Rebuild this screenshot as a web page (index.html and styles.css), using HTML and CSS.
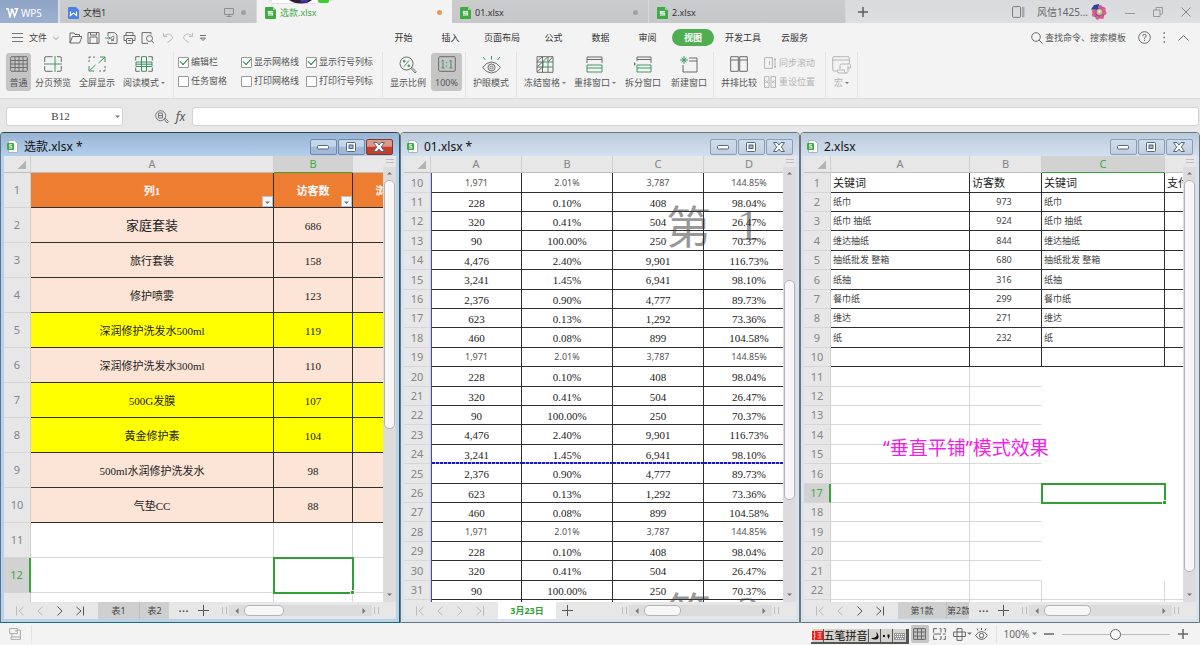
FILE: index.html
```html
<!DOCTYPE html>
<html lang="zh-CN">
<head>
<meta charset="utf-8">
<title>WPS 表格</title>
<link rel="stylesheet" href="styles.css">
</head>
<body>
<svg class="defs" aria-hidden="true">
  <symbol id="sheet-file" viewBox="0 0 11 12"><path d="M1 0h7l3 3v8a1 1 0 0 1-1 1H1a1 1 0 0 1-1-1V1a1 1 0 0 1 1-1z" fill="#3fab43"/><path d="M8 0l3 3H8z" fill="#9bd49d"/><path d="M8 4.500H3.500v1.700h4v1.800H3" fill="none" stroke="#fff" stroke-width="1.200"/></symbol>
  <symbol id="book" viewBox="0 0 11 13"><path d="M1.500.5h6l3 3v9h-9z" fill="#fff" stroke="#a9b4bd"/><rect x="0" y="3" width="7" height="7" rx="1" fill="#3fab43"/><path d="M5 4.700H2.500v1.600h2.300v1.800H2" fill="none" stroke="#fff" stroke-width=".9"/></symbol>
  <symbol id="win-min" viewBox="0 0 14 12"><rect x="1.500" y="4.500" width="11" height="3.500" rx="1" fill="#fff" stroke="#576579"/></symbol>
  <symbol id="win-max" viewBox="0 0 14 12"><rect x="2.500" y="1.500" width="9" height="9" rx="1" fill="#fff" stroke="#576579"/><rect x="5" y="4" width="4" height="3.500" fill="#9db4ce" stroke="#576579"/></symbol>
  <symbol id="win-close" viewBox="0 0 14 12"><path d="M1.500 1.500h3.500L7 4l2-2.500h3.500L9.300 6l3.200 4.500H9L7 8l-2 2.500H1.500L4.700 6z" fill="#fff" stroke="#576579" stroke-linejoin="round"/></symbol>
  <symbol id="first" viewBox="0 0 10 10"><path d="M1.500.5v9M8.500 1L4 5l4.500 4"/></symbol>
  <symbol id="prev" viewBox="0 0 10 10"><path d="M7.500.5L3 5l4.500 4.500"/></symbol>
  <symbol id="next" viewBox="0 0 10 10"><path d="M2.500.5L7 5 2.500 9.500"/></symbol>
  <symbol id="last" viewBox="0 0 10 10"><path d="M8.500.5v9M1.500 1L6 5 1.500 9"/></symbol>
  <symbol id="plus" viewBox="0 0 11 11"><path d="M5.500 0v11M0 5.500h11"/></symbol>
  <symbol id="table-grid" viewBox="0 0 18 16"><rect x=".7" y=".7" width="16.600" height="14.600" rx="1"/><path d="M1 4.500h16M1 8h16M1 11.500h16M5 1v14M9 1v14M13 1v14"/></symbol>
  <symbol id="tri-up" viewBox="0 0 6 4"><path d="M0 3.500h5L2.500 1z" fill="#777"/></symbol>
  <symbol id="tri-down" viewBox="0 0 6 4"><path d="M0 .5h5L2.500 3z" fill="#777"/></symbol>
  <symbol id="tri-left" viewBox="0 0 4 6"><path d="M3.500 0v6L.5 3z" fill="#777"/></symbol>
  <symbol id="tri-right" viewBox="0 0 4 6"><path d="M.5 0v6l3-3z" fill="#777"/></symbol>
</svg>

<header class="tabbar">
  <button class="wps"><svg width="13" height="10" viewBox="0 0 13 10"><path d="M0 .8h2L4 8.500 6 2M4.500 1.500l2 0 2 7L11.500.8H8.500" fill="none" stroke="#fff" stroke-width="1.500"/></svg>WPS</button>
  <button class="tab"><svg class="file" width="11" height="12" viewBox="0 0 11 12"><path d="M1 0h7l3 3v8a1 1 0 0 1-1 1H1a1 1 0 0 1-1-1V1a1 1 0 0 1 1-1z" fill="#4a82e4"/><path d="M2.500 4.500v4L5.500 6l3 2.500v-4" fill="none" stroke="#fff" stroke-width="1.200"/></svg>文档1
    <svg class="monitor" width="10" height="9" viewBox="0 0 10 9"><path d="M.5.500h9v6h-9zM5 6.500v2M2.500 8.500h5" fill="none" stroke="#8c8c8c"/></svg><i class="dot"></i></button>
  <button class="tab active"><svg class="file" width="11" height="12"><use href="#sheet-file"/></svg>选款.xlsx<i class="dot orange"></i>
    <svg class="float-head" width="66" height="12" viewBox="0 0 66 12"><path d="M0 0h66v1q-16 0-18 3H5Q4 1 0 0z" fill="#e2e2e2"/><path d="M5 0h50v3H5z" fill="#fff"/><path d="M22 0h23q-4 3.500-11 3.500T22 0z" fill="#2a1b30"/><path d="M33 0h9l-3 2.500h-5z" fill="#4437a6"/><path d="M51 0h11v1q0 2-2 2h-7q-2 0-2-2z" fill="#3ad12a"/></svg></button>
  <button class="tab"><svg class="file" width="11" height="12"><use href="#sheet-file"/></svg>01.xlsx<i class="dot"></i></button>
  <button class="tab"><svg class="file" width="11" height="12"><use href="#sheet-file"/></svg>2.xlsx</button>
  <button class="new-tab" aria-label="新建"><svg width="10" height="10" viewBox="0 0 10 10"><path d="M5 0v10M0 5h10" stroke="#5d5d5d" stroke-width="1.500"/></svg></button>
  <div class="account">
    <svg width="13" height="12" viewBox="0 0 13 12"><rect x=".6" y=".6" width="8" height="10.800" rx="1" fill="none" stroke="#777"/><path d="M10 .8h1.500q1 0 1 1v8.400q0 1-1 1H10z" fill="#aaa"/></svg>
    <span class="user">风信1425...</span>
    <svg width="16" height="16" viewBox="0 0 16 16"><circle cx="8" cy="8" r="6.500" fill="#8c5f77"/><path d="M0 5.500L3 1l5-1 1 4-5 2z" fill="#24499c"/><g fill="#dd5a92"><circle cx="9" cy="3" r="2"/><circle cx="12.700" cy="5" r="2"/><circle cx="13.500" cy="9" r="2"/><circle cx="11" cy="13" r="2"/><circle cx="6.500" cy="13.800" r="2"/><circle cx="2.800" cy="10.800" r="2"/><circle cx="3" cy="7" r="2"/></g><circle cx="8.500" cy="8" r="3" fill="#cdb793"/><circle cx="8.500" cy="7.500" r="1.400" fill="#f1e6cf"/></svg>
    <button aria-label="最小化"><svg width="10" height="10" viewBox="0 0 10 10"><path d="M0 6.500h10" stroke="#999"/></svg></button>
    <button aria-label="还原"><svg width="10" height="10" viewBox="0 0 10 10"><path d="M.5 3h6.500v6.500H.5zM3 3V.5h6.500V7H7" fill="none" stroke="#999"/></svg></button>
    <button aria-label="关闭"><svg width="10" height="10" viewBox="0 0 10 10"><path d="M.5.500l9 9M9.500.500l-9 9" stroke="#888"/></svg></button>
  </div>
</header>

<div class="menubar">
  <div class="quick">
    <button class="file-menu"><svg width="11" height="9" viewBox="0 0 11 9"><path d="M0 .5h11M0 4.500h11M0 8.500h11" stroke="#777"/></svg>文件<svg width="6" height="4" viewBox="0 0 6 4"><path d="M0 .5l3 3 3-3" fill="none" stroke="#999"/></svg></button>
    <button aria-label="打开"><svg width="13" height="12" viewBox="0 0 13 12"><path d="M1 11V1h4l1 1.500h4.500V4M1 11l2.500-6.500H13L10.500 11z"/></svg></button>
    <button aria-label="保存"><svg width="13" height="12" viewBox="0 0 13 12"><path d="M1 .6h11v10.800H1zM3 11V5h7v6M3.500.6v2.500h6V.6"/></svg></button>
    <button aria-label="输出"><svg width="13" height="12" viewBox="0 0 13 12"><path d="M3 4V.6h6.500L12 3v8.400H3V9M6 9q3-1 3-3.500T6.500 5 9 8.500"/><path class="green" d="M0 6h5M3.500 4.500L5 6 3.500 7.500"/></svg></button>
    <button aria-label="打印"><svg width="13" height="12" viewBox="0 0 13 12"><path d="M3 3V.6h7V3M3 8.500H1V3.500h11v5h-2M3.500 6.500h6v4.900h-6zM5 8.500h3"/></svg></button>
    <button aria-label="打印预览"><svg width="13" height="12" viewBox="0 0 13 12"><path d="M10 2.500V.6H1v10.800h6M10.500 8.500l2.300 2.800"/><circle cx="8.500" cy="6.500" r="3"/></svg></button>
    <button class="dim" aria-label="撤销"><svg width="12" height="11" viewBox="0 0 12 11"><path d="M1.500 1v3.500H5M1.500 4.500Q6 .5 9 3t.500 4.500L5.500 10.500"/></svg></button>
    <button class="dim" aria-label="恢复"><svg width="12" height="11" viewBox="0 0 12 11"><path d="M10.500 1v3.500H7M10.500 4.500Q6 .5 3 3t-.500 4.500L6.500 10.500"/></svg></button>
    <button aria-label="更多"><svg width="9" height="8" viewBox="0 0 9 8"><path d="M1 1.500h6M1.500 4L4 6.500 6.500 4z"/></svg></button>
  </div>
  <nav class="menus">
    <button>开始</button><button>插入</button><button class="wide">页面布局</button><button>公式</button><button>数据</button><button>审阅</button><button class="current">视图</button><button class="wide">开发工具</button><button>云服务</button>
  </nav>
  <div class="find">
    <button class="search"><svg width="12" height="12" viewBox="0 0 12 12"><circle cx="5" cy="5" r="4.300"/><path d="M8 8l3.500 3.500"/></svg>查找命令、搜索模板</button>
    <button aria-label="帮助"><svg width="13" height="13" viewBox="0 0 13 13"><circle cx="6.500" cy="6.500" r="5.800"/><path d="M4.700 5.200q0-1.800 1.800-1.800t1.800 1.600q0 1-1.800 1.800v1M6.500 8.800v1.200"/></svg></button>
    <button aria-label="选项"><svg width="3" height="11" viewBox="0 0 3 11"><path d="M.5 1h1.500M.5 5.500h1.500M.5 10h1.500" stroke-width="1.500"/></svg></button>
    <button aria-label="收起"><svg width="11" height="6" viewBox="0 0 11 6"><path d="M.5 5.500l5-5 5 5"/></svg></button>
  </div>
</div>

<div class="ribbon">
  <div class="group g-views">
    <button class="tool on narrow"><svg width="18" height="16"><use href="#table-grid"/></svg>普通</button>
    <button class="tool"><svg width="18" height="16" viewBox="0 0 18 16"><path d="M8.500.7H2q-1.300 0-1.300 1.300v4M8.500 15.300H2q-1.300 0-1.300-1.300v-4M13 .7h3q1.300 0 1.300 1.300v4M13 15.300h3q1.300 0 1.300-1.300v-4"/><path class="green" d="M0 8h18M11 0v16"/></svg>分页预览</button>
    <button class="tool"><svg width="18" height="16" viewBox="0 0 18 16"><path d="M1 6V4M1 2.500V1h2M5 1h2M17 10v2M17 13.500V15h-2M13 15h-2"/><path class="green" d="M10.500 7L17 1M12 1h5v5M7.500 9L1 15M1 10v5h5"/></svg>全屏显示</button>
    <button class="tool drop"><svg width="18" height="16" viewBox="0 0 18 16"><path d="M.7 4.500V.7h4M13.300.7h4v3.800M.7 11.500v3.800h4M13.300 15.300h4v-3.800"/><path class="green" d="M1 6h16v4.500H1zM6.500.7h5v14.600h-5zM1 8.200h16"/></svg><span>阅读模式</span></button>
  </div>
  <div class="group g-checks">
    <label><input type="checkbox" checked>编辑栏</label><label><input type="checkbox" checked>显示网格线</label><label><input type="checkbox" checked>显示行号列标</label>
    <label><input type="checkbox">任务窗格</label><label><input type="checkbox">打印网格线</label><label><input type="checkbox">打印行号列标</label>
  </div>
  <div class="group g-zoom">
    <button class="tool"><svg width="18" height="18" viewBox="0 0 18 18"><circle cx="7.500" cy="7.500" r="6.500"/><path d="M12 12.500l1-1 4.300 4.300-1.200 1.200z"/><path class="green" d="M10 4.500l-5 6M4.500 4.500h1.500V6H4.500zM9 9h1.500v1.500H9z"/></svg>显示比例</button>
    <button class="tool on mid"><svg width="18" height="16" viewBox="0 0 18 16"><rect x=".7" y=".7" width="16.600" height="14.600" rx="1"/><path class="green" d="M3.500 5L5 4v8M3.500 12h3M11.500 5L13 4v8M11.500 12h3M8.500 6v1.200M8.500 9.500v1.200"/></svg>100%</button>
  </div>
  <div class="group g-eye">
    <button class="tool"><svg width="19" height="18" viewBox="0 0 19 18"><path d="M.6 11.500q4-5.500 9-5.500t8.900 5.500q-4 5.500-8.900 5.500T.6 11.500z"/><circle cx="9.500" cy="11.500" r="3.500"/><circle cx="9.500" cy="11.500" r="1.500"/><path class="green" d="M9.500 0v3.500M1 1l2.500 3M18 1l-2.500 3"/></svg>护眼模式</button>
  </div>
  <div class="group g-window">
    <button class="tool drop"><svg width="18" height="17" viewBox="0 0 18 17"><path d="M1 .7h16v15.600H1zM1 6h7M1 11h7M6.500 1v15M12 1v5M12 11v5M1.500 5l4.500-4M7 5.500L11.500 1M12.500 5.500L16.500 1M1.500 10.500L6 6.500M1.500 15.500L6 11.500"/><path class="green" d="M17 6H7v5h10M12 6v5"/></svg><span>冻结窗格</span></button>
    <button class="tool drop"><svg width="18" height="17" viewBox="0 0 18 17"><path d="M1 7V1h15v6M1 3.500h15"/><path class="green" d="M1 9h15v7H1zM1 12h15"/></svg><span>重排窗口</span></button>
    <button class="tool w46"><svg width="18" height="17" viewBox="0 0 18 17"><path d="M3 5V1h14v6M3 3.500h14"/><path class="green" d="M3 9h14v7H3zM3 12h14"/><path d="M0 6v4l2-2z" fill="#3f9662" stroke="none"/></svg>拆分窗口</button>
    <button class="tool w46"><svg width="18" height="17" viewBox="0 0 18 17"><path d="M3 9v7h14V2H9M9 5h8"/><path class="green" d="M4 0v8M0 4h8M1.500 1.500l5 5M6.500 1.500l-5 5"/></svg>新建窗口</button>
  </div>
  <div class="group g-compare">
    <button class="tool w46"><svg width="18" height="16" viewBox="0 0 18 16"><path d="M.7.7h7.600v14.600H.7zM9.700.7h7.600v14.600H9.700zM.7 4h7.600M9.700 4h7.600"/></svg>并排比较</button>
    <div class="stack">
      <button disabled><svg width="12" height="12" viewBox="0 0 12 12"><path d="M.6.600h7.800v10.800H.6zM5.500 4v4M11 1v10M10 2.500h2M10 9.500h2"/></svg>同步滚动</button>
      <button disabled><svg width="12" height="12" viewBox="0 0 12 12"><path d="M.5.600h4.500v10.800H.5zM7 .6h4.500v10.800H7zM1.500 4.500L4 7M4 4.500L1.500 7M8 4.500L10.500 7M10.500 4.500L8 7"/></svg>重设位置</button>
    </div>
  </div>
  <div class="group g-macro">
    <button class="tool drop" disabled><svg width="19" height="18" viewBox="0 0 19 18"><path d="M6 15H2Q.7 15 .7 14V2Q.7.7 2 .7h14q1.300 0 1.300 1.300v6M.7 4h16.600M8 13V9.500q0-1.500 1.500-1.500h8q1 0 1 1.500V12H16M16 10v5.500q0 1.500-1.500 1.500H7q-1.500 0-1.500-1.500V14h7v1.500q0 1.500 2 1.500"/></svg><span>宏</span></button>
  </div>
</div>

<div class="formula">
  <button class="namebox">B12<svg width="6" height="4"><use href="#tri-down"/></svg></button>
  <button class="lens" aria-label="浏览公式"><svg width="14" height="14" viewBox="0 0 14 14"><circle cx="5.700" cy="5.700" r="5" fill="none" stroke="#777"/><path d="M3.500 3h4v5h-4zM3.500 5.500h4M9 9l1-1 3.500 3.500-1.500 1.500z" fill="none" stroke="#777"/></svg></button>
  <button class="fx">fx</button>
  <input type="text" aria-label="编辑栏">
</div>

<main class="workspace">
  <section class="window front">
    <header class="title"><svg width="11" height="13"><use href="#book"/></svg><h2>选款.xlsx *</h2>
      <button aria-label="最小化"><svg width="14" height="12"><use href="#win-min"/></svg></button><button aria-label="最大化"><svg width="14" height="12"><use href="#win-max"/></svg></button><button class="close" aria-label="关闭"><svg width="14" height="12"><use href="#win-close"/></svg></button></header>
    <div class="pane">
      <div class="sheet">
        <table class="grid products">
          <colgroup><col class="c27"><col class="c243"><col class="c79"><col class="c79"></colgroup>
          <thead><tr><th class="corner"></th><th>A</th><th class="sel">B</th><th></th></tr></thead>
          <tbody>
            <tr class="heading"><th>1</th><td>列1<button class="filter" aria-label="筛选"><svg width="6" height="4"><use href="#tri-down"/></svg></button></td><td>访客数<button class="filter" aria-label="筛选"><svg width="6" height="4"><use href="#tri-down"/></svg></button></td><td>浏览量</td></tr>
            <tr><th>2</th><td class="big">家庭套装</td><td>686</td><td></td></tr>
            <tr><th>3</th><td>旅行套装</td><td>158</td><td></td></tr>
            <tr><th>4</th><td>修护喷雾</td><td>123</td><td></td></tr>
            <tr class="hot"><th>5</th><td>深润修护洗发水500ml</td><td>119</td><td></td></tr>
            <tr><th>6</th><td>深润修护洗发水300ml</td><td>110</td><td></td></tr>
            <tr class="hot"><th>7</th><td>500G发膜</td><td>107</td><td></td></tr>
            <tr class="hot"><th>8</th><td>黄金修护素</td><td>104</td><td></td></tr>
            <tr><th>9</th><td>500ml水润修护洗发水</td><td>98</td><td></td></tr>
            <tr><th>10</th><td>气垫CC</td><td>88</td><td></td></tr>
            <tr class="blank"><th>11</th><td></td><td></td><td></td></tr>
            <tr class="blank"><th class="sel">12</th><td></td><td class="cursor"></td><td></td></tr>
            <tr class="blank"><th></th><td></td><td></td><td></td></tr>
          </tbody>
        </table>
      </div>
      <div class="vscroll"><i class="split"></i><svg width="6" height="4"><use href="#tri-up"/></svg><div class="track"><i class="thumb t1"></i></div><svg width="6" height="4"><use href="#tri-down"/></svg></div>
    </div>
    <footer class="strip">
      <div class="arrows"><button disabled aria-label="第一张"><svg width="10" height="10"><use href="#first"/></svg></button><button disabled aria-label="上一张"><svg width="10" height="10"><use href="#prev"/></svg></button><button aria-label="下一张"><svg width="10" height="10"><use href="#next"/></svg></button><button aria-label="最后一张"><svg width="10" height="10"><use href="#last"/></svg></button></div>
      <button class="stab">表1</button><button class="stab second">表2</button>
      <button class="more" aria-label="更多工作表">···</button><button class="add" aria-label="新建工作表"><svg width="11" height="11"><use href="#plus"/></svg></button>
      <div class="hscroll"><svg width="4" height="6"><use href="#tri-left"/></svg><div class="htrack"><i class="hthumb h1"></i></div><svg width="4" height="6"><use href="#tri-right"/></svg></div>
    </footer>
  </section>

  <section class="window">
    <header class="title"><svg width="11" height="13"><use href="#book"/></svg><h2>01.xlsx *</h2>
      <button aria-label="最小化"><svg width="14" height="12"><use href="#win-min"/></svg></button><button aria-label="最大化"><svg width="14" height="12"><use href="#win-max"/></svg></button><button aria-label="关闭"><svg width="14" height="12"><use href="#win-close"/></svg></button></header>
    <div class="pane">
      <div class="sheet">
        <table class="grid dense stats">
          <colgroup><col class="c27"><col class="c91"><col class="c91"><col class="c91"><col class="c91"></colgroup>
          <thead><tr><th class="corner"></th><th>A</th><th>B</th><th>C</th><th>D</th></tr></thead>
          <tbody>
            <tr class="soft"><th>10</th><td>1,971</td><td>2.01%</td><td>3,787</td><td>144.85%</td></tr>
            <tr><th>11</th><td>228</td><td>0.10%</td><td>408</td><td>98.04%</td></tr>
            <tr><th>12</th><td>320</td><td>0.41%</td><td>504</td><td>26.47%</td></tr>
            <tr><th>13</th><td>90</td><td>100.00%</td><td>250</td><td>70.37%</td></tr>
            <tr><th>14</th><td>4,476</td><td>2.40%</td><td>9,901</td><td>116.73%</td></tr>
            <tr><th>15</th><td>3,241</td><td>1.45%</td><td>6,941</td><td>98.10%</td></tr>
            <tr><th>16</th><td>2,376</td><td>0.90%</td><td>4,777</td><td>89.73%</td></tr>
            <tr><th>17</th><td>623</td><td>0.13%</td><td>1,292</td><td>73.36%</td></tr>
            <tr><th>18</th><td>460</td><td>0.08%</td><td>899</td><td>104.58%</td></tr>
            <tr class="soft"><th>19</th><td>1,971</td><td>2.01%</td><td>3,787</td><td>144.85%</td></tr>
            <tr><th>20</th><td>228</td><td>0.10%</td><td>408</td><td>98.04%</td></tr>
            <tr><th>21</th><td>320</td><td>0.41%</td><td>504</td><td>26.47%</td></tr>
            <tr><th>22</th><td>90</td><td>100.00%</td><td>250</td><td>70.37%</td></tr>
            <tr><th>23</th><td>4,476</td><td>2.40%</td><td>9,901</td><td>116.73%</td></tr>
            <tr class="page-end"><th>24</th><td>3,241</td><td>1.45%</td><td>6,941</td><td>98.10%</td></tr>
            <tr><th>25</th><td>2,376</td><td>0.90%</td><td>4,777</td><td>89.73%</td></tr>
            <tr><th>26</th><td>623</td><td>0.13%</td><td>1,292</td><td>73.36%</td></tr>
            <tr><th>27</th><td>460</td><td>0.08%</td><td>899</td><td>104.58%</td></tr>
            <tr class="soft"><th>28</th><td>1,971</td><td>2.01%</td><td>3,787</td><td>144.85%</td></tr>
            <tr><th>29</th><td>228</td><td>0.10%</td><td>408</td><td>98.04%</td></tr>
            <tr><th>30</th><td>320</td><td>0.41%</td><td>504</td><td>26.47%</td></tr>
            <tr><th>31</th><td>90</td><td>100.00%</td><td>250</td><td>70.37%</td></tr>
            <tr><th></th><td></td><td></td><td></td><td></td></tr>
          </tbody>
        </table>
        <div class="watermark page-one"><span>第</span><b>1</b></div>
        <div class="watermark page-two"><span>第</span><b>2</b></div>
      </div>
      <div class="vscroll"><i class="split"></i><svg width="6" height="4"><use href="#tri-up"/></svg><div class="track"><i class="thumb t2"></i></div><svg width="6" height="4"><use href="#tri-down"/></svg></div>
    </div>
    <footer class="strip">
      <div class="arrows"><button disabled aria-label="第一张"><svg width="10" height="10"><use href="#first"/></svg></button><button disabled aria-label="上一张"><svg width="10" height="10"><use href="#prev"/></svg></button><button disabled aria-label="下一张"><svg width="10" height="10"><use href="#next"/></svg></button><button disabled aria-label="最后一张"><svg width="10" height="10"><use href="#last"/></svg></button></div>
      <button class="stab open">3月23日</button>
      <button class="add" aria-label="新建工作表"><svg width="11" height="11"><use href="#plus"/></svg></button>
      <div class="hscroll"><svg width="4" height="6"><use href="#tri-left"/></svg><div class="htrack"><i class="hthumb h2"></i></div><svg width="4" height="6"><use href="#tri-right"/></svg></div>
    </footer>
  </section>

  <section class="window">
    <header class="title"><svg width="11" height="13"><use href="#book"/></svg><h2>2.xlsx</h2>
      <button aria-label="最小化"><svg width="14" height="12"><use href="#win-min"/></svg></button><button aria-label="最大化"><svg width="14" height="12"><use href="#win-max"/></svg></button><button aria-label="关闭"><svg width="14" height="12"><use href="#win-close"/></svg></button></header>
    <div class="pane">
      <div class="sheet">
        <table class="grid dense keywords">
          <colgroup><col class="c27"><col class="c139"><col class="c72"><col class="c123"><col class="c60"></colgroup>
          <thead><tr><th class="corner"></th><th>A</th><th>B</th><th class="sel">C</th><th></th></tr></thead>
          <tbody>
            <tr class="names"><th>1</th><td>关键词</td><td>访客数</td><td>关键词</td><td>支付</td></tr>
            <tr><th>2</th><td>纸巾</td><td class="num">973</td><td>纸巾</td><td></td></tr>
            <tr><th>3</th><td>纸巾 抽纸</td><td class="num">924</td><td>纸巾 抽纸</td><td></td></tr>
            <tr><th>4</th><td>维达抽纸</td><td class="num">844</td><td>维达抽纸</td><td></td></tr>
            <tr><th>5</th><td>抽纸批发 整箱</td><td class="num">680</td><td>抽纸批发 整箱</td><td></td></tr>
            <tr><th>6</th><td>纸抽</td><td class="num">316</td><td>纸抽</td><td></td></tr>
            <tr><th>7</th><td>餐巾纸</td><td class="num">299</td><td>餐巾纸</td><td></td></tr>
            <tr><th>8</th><td>维达</td><td class="num">271</td><td>维达</td><td></td></tr>
            <tr><th>9</th><td>纸</td><td class="num">232</td><td>纸</td><td></td></tr>
            <tr><th>10</th><td></td><td></td><td></td><td></td></tr>
            <tr class="blank"><th>11</th><td></td><td></td><td></td><td></td></tr>
            <tr class="blank"><th>12</th><td></td><td></td><td></td><td></td></tr>
            <tr class="blank"><th>13</th><td></td><td></td><td></td><td></td></tr>
            <tr class="blank"><th>14</th><td></td><td></td><td></td><td></td></tr>
            <tr class="blank"><th>15</th><td></td><td></td><td></td><td></td></tr>
            <tr class="blank"><th>16</th><td></td><td></td><td></td><td></td></tr>
            <tr class="blank"><th class="sel">17</th><td></td><td></td><td class="cursor"></td><td></td></tr>
            <tr class="blank"><th>18</th><td></td><td></td><td></td><td></td></tr>
            <tr class="blank"><th>19</th><td></td><td></td><td></td><td></td></tr>
            <tr class="blank"><th>20</th><td></td><td></td><td></td><td></td></tr>
            <tr class="blank"><th>21</th><td></td><td></td><td></td><td></td></tr>
            <tr class="blank lined"><th>22</th><td></td><td></td><td></td><td></td></tr>
            <tr class="blank lined"><th></th><td></td><td></td><td></td><td></td></tr>
          </tbody>
        </table>
        <p class="note">“垂直平铺”模式效果</p>
      </div>
      <div class="vscroll"><i class="split"></i><svg width="6" height="4"><use href="#tri-up"/></svg><div class="track"><i class="thumb t3"></i></div><svg width="6" height="4"><use href="#tri-down"/></svg></div>
    </div>
    <footer class="strip">
      <div class="arrows"><button disabled aria-label="第一张"><svg width="10" height="10"><use href="#first"/></svg></button><button disabled aria-label="上一张"><svg width="10" height="10"><use href="#prev"/></svg></button><button aria-label="下一张"><svg width="10" height="10"><use href="#next"/></svg></button><button aria-label="最后一张"><svg width="10" height="10"><use href="#last"/></svg></button></div>
      <button class="stab long">第1款</button><button class="stab cut">第2款</button>
      <button class="more" aria-label="更多工作表">···</button><button class="add" aria-label="新建工作表"><svg width="11" height="11"><use href="#plus"/></svg></button>
      <div class="hscroll"><svg width="4" height="6"><use href="#tri-left"/></svg><div class="htrack"><i class="hthumb h3"></i></div><svg width="4" height="6"><use href="#tri-right"/></svg></div>
    </footer>
  </section>
</main>

<footer class="status">
  <button class="record" aria-label="状态"><svg width="13" height="12" viewBox="0 0 13 12"><path d="M.6.600h7.800v5H.6zM8.400 2h3v7M2 11.400h9.500V9H2zM3 5.600V9M6 3h2"/></svg></button>
  <div class="ime"><span class="seal"><svg width="11" height="11" viewBox="0 0 11 11"><path d="M0 1h11v9H0z" fill="#ee1c14"/><path d="M2.500 1v9M1 4h3M5.500 2.500h4M5.500 5h4M8 2v6M5.500 8h4M1 8l3-2" stroke="#fbd9d2" stroke-width=".7" fill="none"/></svg></span><span class="ime-name">五笔拼音</span><span><svg width="9" height="10" viewBox="0 0 9 10"><path d="M6 1q3 6-5 6 2 2 5 1.500T8.500 5 6 1z" fill="#111"/></svg></span><span><svg width="9" height="10" viewBox="0 0 9 10"><path d="M1 4h2v2H1zM5.500 3.500h2v2.500l-1.500 2v-2h-.5z" fill="#111"/></svg></span><span><svg width="11" height="10" viewBox="0 0 11 10"><path d="M0 2h11v7H0z" fill="#999"/><path d="M1 3.500h9M1 5.500h9M2 7.500h7" stroke="#fff" stroke-dasharray="1 1"/></svg></span></div>
  <div class="modes">
    <button class="on" aria-label="普通视图"><svg width="13" height="12" viewBox="0 0 13 12"><path d="M.6.600h11.800v10.800H.6zM.6 4h11.800M.6 8h11.800M4.500.6v11M8.500.6v11"/></svg></button>
    <button aria-label="分页预览"><svg width="13" height="12" viewBox="0 0 13 12"><path d="M4 .6H.6v4M.6 7.500v3.900H4M6.500 .6h1.500v4M.6 6h7.400M10 6h2.500M12.400 4.500V.6H10.500M8 8v3.400H6.500M12.400 8v3.400h-2"/></svg></button>
    <button class="drop-s" aria-label="阅读模式"><svg width="13" height="13" viewBox="0 0 13 13"><path d="M4 .6h5v11.800H4zM.6 4h11.800v4.500H.6z"/></svg><svg width="6" height="4"><use href="#tri-down"/></svg></button>
    <button aria-label="护眼模式"><svg width="13" height="12" viewBox="0 0 13 12"><path d="M.6 7.500q2.500-4 5.900-4t5.900 4q-2.500 4-5.900 4t-5.900-4zM6.500 0v2M2 .5l1 2M11 .5l-1 2"/><circle cx="6.500" cy="7.500" r="2.200"/></svg></button>
  </div>
  <button class="percent">100%<svg width="6" height="4"><use href="#tri-down"/></svg></button>
  <div class="zoom"><button aria-label="缩小"><svg width="10" height="10" viewBox="0 0 10 10"><path d="M0 5h10"/></svg></button><input type="range" aria-label="缩放" min="0" max="100" value="49"><button aria-label="放大"><svg width="10" height="10" viewBox="0 0 10 10"><path d="M5 0v10M0 5h10"/></svg></button></div>
</footer>
</body>
</html>
```
FILE: styles.css
```css
* { box-sizing: border-box; }
body {
  margin: 0;
  height: 100vh;
  display: flex;
  flex-direction: column;
  overflow: hidden;
  background: #f3f3f3;
  color: #444;
  font: 9px/14px "Noto Sans", "Noto Sans CJK SC", sans-serif;
}
button {
  margin: 0;
  padding: 0;
  border: 0;
  background: none;
  color: inherit;
  font: inherit;
  white-space: nowrap;
}
svg { display: block; flex: none; }
.defs { position: absolute; width: 0; height: 0; }

/* document tabs */
.tabbar {
  flex: none;
  display: flex;
  height: 23px;
  background: linear-gradient(#d9dadc, #dedfe1);
}
.wps {
  width: 58px;
  display: flex;
  align-items: center;
  gap: 2px;
  padding: 2px 0 0 6px;
  margin-right: 2px;
  background: linear-gradient(#8fa3c5, #9cb0d0);
  color: #fff;
  font-size: 10px;
}
.tab {
  position: relative;
  flex: 0 1 197px;
  display: flex;
  align-items: center;
  padding: 2px 10px 0 8px;
  border-right: 1px solid #d8d8da;
  background: linear-gradient(#cbccce, #c6c7c9);
  color: #333;
}
.tab .file { margin-right: 4px; }
.tab.active { flex-basis: 195px; background: #f3f3f3; color: #3fab43; border: 0; }
.monitor { margin-left: auto; margin-right: 7px; }
.dot { width: 5px; height: 5px; border-radius: 50%; background: #a0a0a0; margin-left: auto; }
.monitor + .dot { margin-left: 0; }
.dot.orange { background: #e69a55; }
.float-head { position: absolute; left: 10px; top: 0; }
.new-tab { padding: 1px 12px 0; }
.account {
  margin-left: auto;
  display: flex;
  align-items: center;
  gap: 18px;
  padding-right: 9px;
  color: #666;
}
.account .user { margin: 0 -15px 0 -6px; font-size: 10px; }

/* menus */
.menubar { flex: none; display: flex; align-items: center; height: 28px; padding-top: 1px; }
.menubar svg, .ribbon svg { fill: none; stroke: #6b6b6b; }
svg .green { stroke: #3f9662; }
.quick { flex: 0 0 380px; display: flex; align-items: center; gap: 5px; padding-left: 12px; }
.file-menu { display: flex; align-items: center; gap: 6px; margin-right: 5px; }
.quick .dim { opacity: .4; padding-left: 3px; }
.menus { display: flex; align-items: center; }
.menus button { width: 47px; height: 17px; color: #333; }
.menus .wide { width: 56px; }
.menus .current {
  width: 42px;
  margin: 0 1px;
  border-radius: 9px;
  background: #4fae52;
  color: #fff;
  font-weight: bold;
}
.find { margin-left: auto; display: flex; align-items: center; gap: 12px; padding-right: 11px; }
.search { display: flex; align-items: center; gap: 2px; color: #555; }

/* ribbon */
.ribbon {
  flex: none;
  display: flex;
  height: 48px;
  padding-top: 1px;
  border-bottom: 1px solid #dadada;
}
.group { display: flex; align-items: flex-start; border-right: 1px solid #e3e3e3; height: 45px; padding-top: 1px; color: #555; }
.tool {
  width: 44px;
  height: 38px;
  padding: 3px 0 1px;
  display: flex;
  flex-direction: column;
  align-items: center;
  justify-content: space-between;
  border-radius: 3px;
}
.tool.narrow { width: 25px; }
.tool.mid { width: 31px; }
.tool.w46 { width: 46px; }
.tool.drop { width: 50px; }
.tool.on { background: #c5c5c5; }
.tool.drop span { display: flex; align-items: center; gap: 2px; }
.tool.drop span::after {
  content: "";
  border: 2px solid transparent;
  border-top-color: #777;
  border-bottom: 0;
}
.g-views { padding-left: 6px; padding-right: 4px; }
.g-checks {
  display: grid;
  grid-template-columns: 63px 65px 76px;
  grid-auto-rows: 19px;
  padding-left: 4px;
  padding-top: 3px;
}
.g-checks label { display: flex; align-items: center; gap: 2px; white-space: nowrap; }
.g-checks input {
  appearance: none;
  width: 11px;
  height: 11px;
  margin: 0;
  border: 1px solid #999;
  border-radius: 1px;
  background: #fff;
  display: grid;
  place-items: center;
}
.g-checks input:checked::before {
  content: "";
  width: 7px;
  height: 4px;
  border: solid #2c8a50;
  border-width: 0 0 1px 1px;
  transform: rotate(-48deg);
  margin-bottom: 3px;
}
.g-zoom { padding-left: 3px; padding-right: 3px; gap: 1px; }
.g-eye { padding-left: 3px; padding-right: 3px; }
.g-window { padding-left: 3px; padding-right: 1px; }
.g-compare { padding-left: 2px; padding-right: 10px; }
.stack { display: flex; flex-direction: column; gap: 5px; padding: 3px 0 0 2px; }
.stack button { display: flex; align-items: center; gap: 3px; }
.group button:disabled { color: #b5b5b5; }
.group button:disabled svg { stroke: #b5b5b5; }
.g-macro .tool.drop { width: 31px; }

/* formula bar */
.formula {
  flex: none;
  display: flex;
  align-items: center;
  height: 33px;
  padding: 2px 1px 0 6px;
  background: #e7e7e7;
}
.namebox {
  position: relative;
  width: 117px;
  height: 19px;
  padding-right: 8px;
  border: 1px solid #d3d3d3;
  border-radius: 3px;
  background: #fff;
  font: 11px/17px "Liberation Serif", serif;
}
.namebox svg { position: absolute; right: 1px; top: 7px; }
.lens { margin-left: 32px; }
.fx { width: 23px; font: italic 12px/17px "Noto Sans", sans-serif; color: #555; }
.formula input {
  flex: 1;
  min-width: 0;
  height: 19px;
  border: 1px solid #d3d3d3;
  border-radius: 3px;
  background: #fff;
}

/* tiled windows */
.workspace { flex: 1; min-height: 0; display: flex; background: #e7e7e7; }
.window {
  flex: 1 1 0;
  min-width: 0;
  display: flex;
  flex-direction: column;
  padding: 0 3px 3px;
  border: 1px solid #6f7479;
  border-radius: 4px 4px 0 0;
  background: #d6e3f1;
}
.window.front { background: #b8d2ee; border-color: #33424d #1d5a68 #176a78 #5d7284; }
.title {
  flex: none;
  height: 23px;
  display: flex;
  align-items: center;
  gap: 1px;
  padding: 4px 6px 0;
  margin: 0 -3px;
  border-radius: 3px 3px 0 0;
  background: linear-gradient(#bccbdc, #d3e0ef);
}
.front .title { background: linear-gradient(#98b4d3, #b4cfec); }
.title h2 { flex: 1; margin: 0 0 0 5px; color: #111; font-size: 12px; line-height: 16px; font-weight: 400; }
.title button {
  width: 27px;
  height: 16px;
  padding: 1px 5px;
  border: 1px solid #8d9db4;
  border-radius: 2px;
  background: linear-gradient(#cfdcea, #c0cfe0);
}
.front .title button { background: linear-gradient(#c3d7ec 45%, #9fb9d6 50%); border-color: #7087a5; }
.front .title .close { background: linear-gradient(#dd9a8b 45%, #c2402a 50%); border-color: #7c3a35; }
.pane { flex: 1; min-height: 0; display: flex; background: #e7e7e7; }
.sheet { position: relative; flex: 1; min-width: 0; overflow: hidden; background: #fff; }

/* cell grids */
.grid { width: 100%; table-layout: fixed; border-spacing: 0; }
.c27 { width: 27px; }
.c243 { width: 243px; }
.c79 { width: 79px; }
.c91 { width: 91px; }
.c139 { width: 139px; }
.c72 { width: 72px; }
.c123 { width: 123px; }
.c60 { width: 60px; }
.grid th, .grid td { padding: 0; overflow: hidden; white-space: nowrap; }
.grid th {
  background: #e7e7e7;
  color: #858585;
  font-size: 11px;
  line-height: 14px;
  font-weight: 400;
  border-right: 1px solid #cfcfcf;
  border-bottom: 1px solid #d6d6d6;
}
.grid thead tr { height: 17px; }
.grid thead th { border-bottom-color: #bdbdbd; }
.grid th.sel { background: #d2d2d2; color: #3fab43; }
.grid thead th.sel { border-bottom-color: #35a53a; }
.grid tbody th.sel { border-right: 2px solid #35a53a; }
.grid .corner { background: linear-gradient(135deg, transparent 50%, #b5b5b5 50%) 14px 5px / 8px 8px no-repeat #e7e7e7; }
.grid td {
  position: relative;
  text-align: center;
  border-right: 1px solid #2e2e2e;
  border-bottom: 1px solid #2e2e2e;
  color: #222;
  font: 11px/14px "Liberation Serif", "Noto Sans CJK SC", serif;
}
.grid .blank td { border-color: #d9d9d9; }
.grid td.cursor { overflow: visible; outline: 2px solid #2fa034; outline-offset: -1px; z-index: 1; }
.grid td.cursor::after {
  content: "";
  position: absolute;
  right: -2px;
  bottom: -2px;
  width: 3px;
  height: 3px;
  background: #2fa034;
  box-shadow: 0 0 0 1px #fff;
}
.products tbody tr { height: 35px; background: #fce4d6; }
.products tr.hot { background: #ff0; }
.products tr.blank { background: #fff; }
.products tr.heading { background: #ed7d31; }
.products td { padding-top: 1px; }
.products .heading td { color: #fff; font-weight: bold; }
.products td.big { font-size: 13px; }
.filter {
  position: absolute;
  right: 0;
  bottom: 0;
  width: 11px;
  height: 11px;
  padding: 3px 0 0 2px;
  border: 1px solid #b9c3cf;
  background: #f4f6f9;
}
.dense tbody tr { height: 19px; }
.dense tbody tr:nth-child(5n+1), .dense tbody tr:nth-child(5n+4) { height: 20px; }
.stats td { padding-top: 1px; }
.stats td:nth-child(2) { border-left: 1px solid #4b45b8; }
.stats .soft td { padding-top: 0; font: 9px/14px "Noto Sans", sans-serif; color: #555; }
.stats .page-end td {
  border-bottom: 0;
  background: repeating-linear-gradient(90deg, #1d1bb8 0 3px, #a9a8e0 3px 4px) bottom / 100% 2px no-repeat;
}
.keywords td { text-align: left; padding-left: 2px; font: 9px/14px "Noto Sans", "Noto Sans CJK SC", sans-serif; color: #444; }
.keywords .names td { font-size: 11px; color: #222; }
.keywords td.num { text-align: center; padding: 0 3px 0 0; }
.keywords .blank td:nth-child(n+4) { border-color: transparent; }
.keywords .blank td:nth-child(3) { border-right-color: transparent; }
.keywords .lined td:nth-child(n) { border-color: #d9d9d9; }
.watermark {
  position: absolute;
  left: 262px;
  display: flex;
  align-items: center;
  gap: 26px;
  color: #333;
  opacity: .5;
  font: 400 45px/60px "Noto Sans CJK SC", sans-serif;
}
.watermark b { font: 400 45px/60px "Liberation Serif", serif; }
.page-one { top: 39px; }
.page-two { top: 426px; }
.note {
  position: absolute;
  left: 79px;
  top: 279px;
  margin: 0;
  color: #f01fe6;
  font-size: 19px;
  line-height: 26px;
  white-space: nowrap;
}

/* scroll bars */
.vscroll {
  flex: none;
  width: 13px;
  display: flex;
  flex-direction: column;
  align-items: center;
  gap: 5px;
  padding: 3px 0 5px;
  background: linear-gradient(#e7e7e7 11px, #dcdcdc 11px);
}
.split { width: 8px; height: 4px; border: solid #bdbdbd; border-width: 1px 0; margin-bottom: 3px; }
.track { flex: 1; width: 11px; display: flex; flex-direction: column; }
.thumb, .hthumb { border: 1px solid #b4b4b4; border-radius: 5px; background: #f7f7f7; }
.t1 { height: 61%; }
.t2 { margin-top: 100px; height: 54%; }
.t3 { height: 96%; }
.strip { flex: none; display: flex; align-items: center; height: 17px; background: #e7e7e7; }
.strip svg { fill: none; stroke: #555; }
.strip .hscroll svg { stroke: none; }
.arrows { display: flex; gap: 10px; padding: 0 13px 0 11px; }
.arrows button:disabled { opacity: .3; }
.stab { height: 17px; width: 42px; background: #cfcfcf; border-right: 1px solid #bfbfbf; }
.stab.second { width: 29px; border: 0; }
.stab.long { width: 49px; }
.stab.cut { width: 22px; overflow: hidden; border: 0; text-align: left; }
.stab.open { width: 58px; background: #fff; color: #2fa034; font-weight: bold; border: 0; }
.more { width: 29px; font-size: 13px; }
.open + .add { margin-left: 6px; }
.hscroll {
  margin-left: auto;
  flex: 0 0 143px;
  height: 11px;
  display: flex;
  align-items: center;
  gap: 5px;
  padding: 0 6px;
  margin-right: 24px;
  background: #dcdcdc;
  position: relative;
}
.hscroll::before, .hscroll::after {
  content: "";
  position: absolute;
  left: -7px;
  width: 3px;
  height: 7px;
  border: solid #bdbdbd;
  border-width: 0 1px;
}
.hscroll::after { left: auto; right: -7px; }
.htrack { flex: 1; display: flex; }
.hthumb { height: 11px; width: 35%; }
.h2 { width: 33%; }
.h3 { width: 42%; }

/* status bar */
.status { flex: none; display: flex; align-items: center; height: 22px; padding-right: 12px; color: #666; }
.status button svg { fill: none; stroke: #666; }
.status use { stroke: none; }
.record { width: 32px; height: 18px; padding-left: 9px; border-right: 1px solid #e2e2e2; }
.record svg { opacity: .5; }
.ime {
  margin-left: auto;
  display: flex;
  align-items: center;
  height: 15px;
  margin-top: 5px;
  border: solid #555;
  border-width: 0 2px 2px 0;
  background: #d6d3ce;
}
.ime span { height: 13px; display: flex; align-items: center; padding: 0 1px; border-right: 1px solid #555; }
.ime .seal { border-left: 1px solid #fff; padding: 0; }
.ime .ime-name { color: #111; font-size: 11px; line-height: 13px; padding: 0; }
.modes { display: flex; align-items: center; gap: 2px; margin-left: 2px; padding-right: 5px; border-right: 1px solid #e2e2e2; }
.modes button { width: 18px; height: 18px; padding: 0 2px; border-radius: 2px; }
.modes .on { background: #c5c5c5; }
.modes .drop-s { width: 20px; display: flex; align-items: center; gap: 1px; }
.percent { display: flex; align-items: center; gap: 3px; font-size: 10px; margin-left: 7px; }
.zoom { display: flex; align-items: center; gap: 8px; margin-left: 6px; }
.zoom svg { stroke-width: 1.5; }
.zoom input { appearance: none; width: 108px; height: 12px; margin: 0; background: linear-gradient(#bbb, #bbb) center / 100% 1px no-repeat; }
.zoom input::-webkit-slider-thumb {
  appearance: none;
  width: 11px;
  height: 11px;
  border: 1px solid #666;
  border-radius: 50%;
  background: #f7f7f7;
}
```
